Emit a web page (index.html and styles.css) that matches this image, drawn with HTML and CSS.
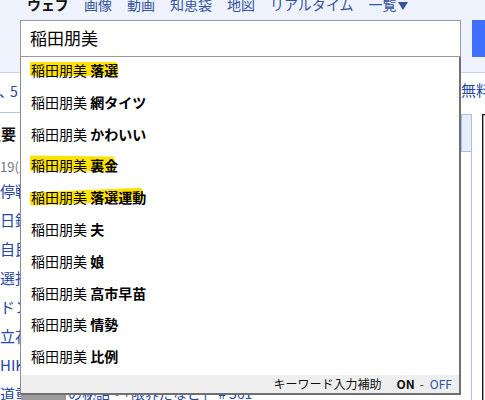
FILE: index.html
```html
<!DOCTYPE html>
<html lang="ja">
<head>
<meta charset="utf-8">
<title>稲田朋美 - 検索</title>
<link rel="stylesheet" href="styles.css">
</head>
<body>
<div class="page">
  <header class="header">
    <nav class="nav">
      <span class="nav-item current">ウェブ</span>
      <a class="nav-item" href="#">画像</a>
      <a class="nav-item" href="#">動画</a>
      <a class="nav-item" href="#">知恵袋</a>
      <a class="nav-item" href="#">地図</a>
      <a class="nav-item" href="#">リアルタイム</a>
      <a class="nav-item" href="#">一覧<svg class="caret" viewBox="0 0 10 8" width="10" height="8"><path d="M0 0H10L5 8Z"/></svg></a>
    </nav>
    <div class="search">
      <input class="q" type="text" value="稲田朋美">
      <button class="go" type="button"></button>
    </div>
  </header>

  <main class="main">
    <section class="left">
      <div class="pager"><span class="comma">、</span>5</div>
      <div class="heading">主要</div>
      <div class="date">19(土)</div>
      <ul class="news">
        <li><a href="#">停戦合意の行方</a></li>
        <li><a href="#">日鉄の買収問題</a></li>
        <li><a href="#">自民党総裁選</a></li>
        <li><a href="#">選択的夫婦別姓</a></li>
        <li><a href="#">ドンキの新業態</a></li>
        <li><a href="#">立花氏が出馬</a></li>
        <li><a href="#">HIKAKINが発表</a></li>
        <li class="last"><span class="cut">道重さゆみ</span><span class="thumb"></span><a href="#">の秘話・「限界だなど」 # 561</a></li>
      </ul>
    </section>
    <aside class="right">
      <div class="free">無料</div>
      <div class="side">
        <div class="tab"><div class="tab-top"></div></div>
        <div class="frame"></div>
      </div>
    </aside>
  </main>

  <div class="suggest">
    <div class="sg-item"><span class="hl">稲田朋美 <b>落選</b></span></div>
    <div class="sg-item">稲田朋美 <b>網タイツ</b></div>
    <div class="sg-item">稲田朋美 <b>かわいい</b></div>
    <div class="sg-item"><span class="hl hl-down">稲田朋美 <b>裏金</b></span></div>
    <div class="sg-item"><span class="hl hl-up">稲田朋美 <b>落選運動</b></span></div>
    <div class="sg-item">稲田朋美 <b>夫</b></div>
    <div class="sg-item">稲田朋美 <b>娘</b></div>
    <div class="sg-item">稲田朋美 <b>高市早苗</b></div>
    <div class="sg-item">稲田朋美 <b>情勢</b></div>
    <div class="sg-item">稲田朋美 <b>比例</b></div>
    <div class="sg-foot"><span>キーワード入力補助</span><b class="on">ON</b><span class="dash">-</span><a class="off" href="#">OFF</a></div>
  </div>
</div>
</body>
</html>
```
FILE: styles.css
```css
* { box-sizing: border-box; }
html, body { margin: 0; padding: 0; }
body {
  background: #fff;
  font-family: "Noto Sans CJK JP", "Noto Sans", sans-serif;
  color: #111;
}
a { text-decoration: none; }
ul { list-style: none; margin: 0; padding: 0; }

.page {
  position: relative;
  width: 485px;
  height: 400px;
  overflow: hidden;
}

/* header */
.header {
  display: flow-root;
  background: #eff3fe;
  border-bottom: 1px solid #c4d2f2;
  padding-bottom: 15px;
}
.nav {
  display: flex;
  gap: 15px;
  height: 18px;
  margin-top: -5px;
  padding-left: 27px;
  font-size: 14px;
  line-height: 18px;
  white-space: nowrap;
}
.nav-item { color: #34529e; }
.nav-item.current { color: #111; font-weight: 700; }
.caret { fill: #34529e; margin-left: 1px; vertical-align: 0; }

.search {
  display: flex;
  margin-top: 7px;
  padding-left: 20px;
}
.q {
  flex: none;
  width: 441px;
  height: 37px;
  margin: 0;
  border: 1px solid #9a9a9a;
  padding: 0 0 2px 9px;
  background: #fff;
  font-family: "Noto Sans CJK JP", "Noto Sans", sans-serif;
  font-size: 17px;
  color: #000;
  outline: none;
}
.go {
  flex: none;
  width: 80px;
  height: 37px;
  margin-left: 11px;
  border: 0;
  padding: 0;
  background: #3f6fff;
}

/* main */
.main { display: flex; }
.left {
  width: 461px;
  flex: none;
  overflow: hidden;
}
.pager {
  height: 40px;
  line-height: 36px;
  border-bottom: 1px solid #b5c6ea;
  font-size: 14px;
  color: #2546a4;
}
.comma { letter-spacing: -3px; margin-left: -1px; }
.heading {
  height: 41px;
  line-height: 41px;
  margin-left: -14px;
  font-size: 15px;
  font-weight: 700;
  color: #111;
  white-space: nowrap;
}
.date {
  height: 22px;
  padding-top: 4px;
  line-height: 18px;
  font-size: 13px;
  color: #777;
}
.news li {
  height: 29px;
  line-height: 29px;
  font-size: 15px;
  white-space: nowrap;
}
.news a { color: #2546a4; }
.news .last { display: flex; align-items: center; }
.cut {
  width: 21px;
  overflow: hidden;
  color: #2546a4;
  flex: none;
}
.thumb {
  width: 45px;
  height: 16px;
  margin-top: 6px;
  background: #9b9b9b;
  flex: none;
}
.last a { margin-left: 2px; font-size: 14px; }

.right { flex: 1; }
.free {
  height: 41px;
  line-height: 34px;
  font-size: 15px;
  color: #2546a4;
  white-space: nowrap;
}
.side { display: flex; }
.tab {
  width: 11px;
  height: 300px;
  border-right: 1px solid #a9bfea;
  flex: none;
}
.tab-top {
  height: 38px;
  background: #e6edfc;
  border: 1px solid #a9bfea;
  border-right: 0;
}
.frame {
  width: 40px;
  height: 300px;
  margin-left: 10px;
  border: 1px solid #1a1a1a;
  box-shadow: inset 1px 1px 0 #a0a0a0;
  background: #fff;
}

/* suggestion dropdown (overlays the page) */
.suggest {
  position: absolute;
  left: 20px;
  top: 57px;
  width: 441px;
  background: #fff;
  border-left: 1px solid #8c8c8c;
  border-right: 2px solid #707070;
  border-bottom: 2px solid #707070;
  z-index: 5;
}
.sg-item {
  height: 31.8px;
  line-height: 27px;
  padding-left: 10px;
  font-size: 14px;
  color: #000;
  white-space: nowrap;
}
.sg-item b { font-weight: 700; }
.hl {
  position: relative;
  z-index: 0;
}
.hl::before {
  content: "";
  position: absolute;
  left: -1px;
  right: 0;
  top: 2px;
  height: 14px;
  background: #ffe200;
  border-radius: 1px 4px 3px 1px;
  z-index: -1;
}
.hl-down::before {
  right: 3px;
  height: 15px;
  top: 1px;
  transform: rotate(0.8deg);
}
.hl-up::before {
  right: 3px;
  height: 13px;
  top: 3px;
  transform: rotate(-2.5deg);
}
.sg-foot {
  height: 18px;
  line-height: 18px;
  padding-right: 7px;
  background: #efefef;
  text-align: right;
  font-size: 12px;
  color: #111;
  white-space: nowrap;
}
.sg-foot .on { margin-left: 15px; font-weight: 700; }
.sg-foot .dash { margin: 0 6px 0 5px; color: #333; }
.sg-foot .off { color: #2c4fa8; }
```
